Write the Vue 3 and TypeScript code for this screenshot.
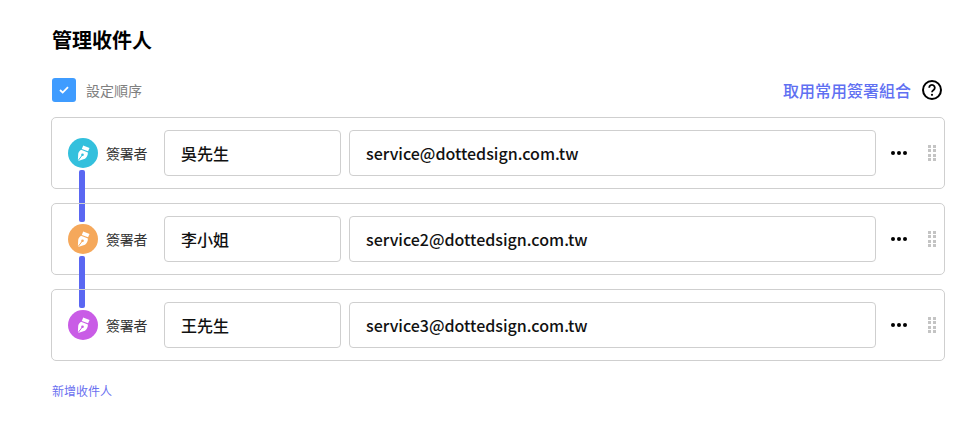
<script setup lang="ts">
interface Recipient {
  name: string
  email: string
  color: string
}

const recipients: Recipient[] = [
  { name: '吳先生', email: 'service@dottedsign.com.tw', color: '#33c0dd' },
  { name: '李小姐', email: 'service2@dottedsign.com.tw', color: '#f5a85b' },
  { name: '王先生', email: 'service3@dottedsign.com.tw', color: '#c95ce6' },
]
</script>

<template>
  <div class="page">
    <h1 class="title">管理收件人</h1>

    <div class="toolbar">
      <label class="order">
        <span class="checkbox">
          <svg width="10" height="8" viewBox="0 0 10 8" fill="none">
            <path d="M1 4l2.700 2.600L9 1.200" stroke="#fff" stroke-width="1.800" />
          </svg>
        </span>
        <span class="order-text">設定順序</span>
      </label>
      <div class="toolbar-right">
        <a class="link-strong">取用常用簽署組合</a>
        <svg class="help" width="22" height="22" viewBox="0 0 22 22" fill="none">
          <circle cx="11" cy="11" r="9" stroke="#000" stroke-width="2" />
          <path d="M8.200 8.700a2.800 2.800 0 1 1 4.400 2.300c-1 .7-1.600 1.100-1.600 2.300" stroke="#000" stroke-width="1.800" />
          <circle cx="11" cy="15.800" r="1.100" fill="#000" />
        </svg>
      </div>
    </div>

    <div class="list">
      <div v-for="(r, i) in recipients" :key="r.email" class="row">
        <span v-if="i < recipients.length - 1" class="connector"></span>
        <span class="avatar" :style="{ background: r.color }">
          <svg width="13" height="16" viewBox="0 0 13 16" fill="#fff">
            <path d="M6.200.5l6.300 2.400-1.400 3.400-6.300-2.400z" />
            <path d="M4.100 4.800l6.800 2.600c0 2.700-1 4.800-2.900 6.300l-6.200 2-.9-.7.300-6.300c.4-1.600 1.400-3 2.900-3.900z" />
            <circle cx="5.500" cy="9.800" r="1.300" :fill="r.color" />
            <path d="M5.500 9.800L1.300 15.300" :stroke="r.color" stroke-width="1" />
          </svg>
        </span>
        <span class="role">簽署者</span>
        <div class="field name">{{ r.name }}</div>
        <div class="field email">{{ r.email }}</div>
        <span class="more"><i></i><i></i><i></i></span>
        <span class="handle">
          <i v-for="n in 8" :key="n"></i>
        </span>
      </div>
    </div>

    <a class="link-add">新增收件人</a>
  </div>
</template>

<style>
html,
body {
  margin: 0;
  background: #fff;
}
</style>

<style scoped>
.page {
  width: 979px;
  height: 423px;
  box-sizing: border-box;
  padding: 26px 34px 0 51px;
  font-family: 'Noto Sans CJK TC', 'Noto Sans', sans-serif;
  overflow: hidden;
}

.title {
  margin: 0;
  padding-left: 1px;
  font-size: 20px;
  line-height: 28px;
  font-weight: 700;
  color: #000;
}

.toolbar {
  display: flex;
  align-items: center;
  justify-content: space-between;
  margin-top: 24px;
  height: 24px;
}

.order {
  display: flex;
  align-items: center;
  gap: 10px;
  padding-left: 1px;
}

.checkbox {
  width: 24px;
  height: 24px;
  border-radius: 3px;
  background: #3f9cff;
  display: flex;
  align-items: center;
  justify-content: center;
}

.order-text {
  font-size: 14px;
  line-height: 20px;
  margin-top: -1px;
  color: #808080;
}

.toolbar-right {
  display: flex;
  align-items: center;
  gap: 10px;
  margin-right: 2px;
}

.link-strong {
  font-size: 16px;
  line-height: 22px;
  margin-top: -1px;
  font-weight: 500;
  color: #6070f2;
}

.list {
  display: flex;
  flex-direction: column;
  gap: 14px;
  margin-top: 15px;
}

.row {
  position: relative;
  height: 72px;
  box-sizing: border-box;
  border: 1px solid #cfcfcf;
  border-radius: 5px;
  display: flex;
  align-items: center;
  padding-left: 16px;
}

.connector {
  position: absolute;
  left: 27px;
  top: 52px;
  width: 6px;
  height: 52px;
  border-radius: 2px;
  background: #5a67f2;
}

.avatar {
  width: 30px;
  height: 30px;
  border-radius: 50%;
  display: flex;
  align-items: center;
  justify-content: center;
  flex: none;
}

.role {
  margin-left: 8px;
  width: 51px;
  font-size: 14px;
  line-height: 20px;
  margin-top: -1px;
  letter-spacing: -0.3px;
  color: #333;
  flex: none;
}

.field {
  height: 46px;
  box-sizing: border-box;
  border: 1px solid #cfcfcf;
  border-radius: 4px;
  display: flex;
  align-items: center;
  padding-left: 16px;
  font-size: 16px;
  font-weight: 500;
  color: #111;
  flex: none;
}

.name {
  margin-left: 7px;
  width: 177px;
}

.email {
  margin-left: 8px;
  width: 527px;
}

.more {
  display: flex;
  gap: 2px;
  margin-left: 15px;
}

.more i {
  width: 4px;
  height: 4px;
  border-radius: 50%;
  background: #000;
}

.handle {
  display: grid;
  grid-template-columns: 3px 3px;
  gap: 1.500px 2px;
  margin-left: 21px;
}

.handle i {
  width: 3px;
  height: 3px;
  background: #c4c4c4;
}

.link-add {
  display: block;
  margin-top: 21px;
  padding-left: 1px;
  font-size: 12px;
  line-height: 18px;
  color: #6a70f0;
}
</style>
